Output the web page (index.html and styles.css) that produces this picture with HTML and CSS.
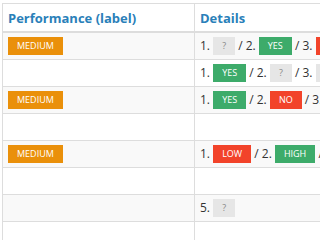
FILE: index.html
```html
<!DOCTYPE html>
<html>
<head>
<meta charset="utf-8">
<link rel="stylesheet" href="styles.css">
</head>
<body>
<div class="wrap">
<table class="grid">
<colgroup><col class="c1"><col class="c2"></colgroup>
<thead>
<tr><th>Performance (label)</th><th>Details</th></tr>
</thead>
<tbody>
<tr class="odd"><td><span class="badge orange">MEDIUM</span></td><td>1. <span class="badge grey">?</span> / 2. <span class="badge green">YES</span> / 3. <span class="badge red">NO</span></td></tr>
<tr><td></td><td>1. <span class="badge green">YES</span> / 2. <span class="badge grey">?</span> / 3. <span class="badge grey">?</span></td></tr>
<tr class="odd"><td><span class="badge orange">MEDIUM</span></td><td>1. <span class="badge green">YES</span> / 2. <span class="badge red">NO</span> / 3. <span class="badge green">YES</span></td></tr>
<tr><td></td><td></td></tr>
<tr class="odd"><td><span class="badge orange">MEDIUM</span></td><td>1. <span class="badge red">LOW</span> / 2. <span class="badge green">HIGH</span> / 3. <span class="badge grey">?</span></td></tr>
<tr><td></td><td></td></tr>
<tr class="odd"><td></td><td>5. <span class="badge grey">?</span></td></tr>
<tr><td></td><td></td></tr>
</tbody>
</table>
</div>
</body>
</html>
```
FILE: styles.css
```css
html, body {
  margin: 0;
  padding: 0;
  background: #fff;
  overflow: hidden;
}
body {
  font-family: "Open Sans", sans-serif;
  font-size: 12px;
  color: #333;
}
.wrap {
  padding: 3px 0 0 2px;
}
.grid {
  border-collapse: collapse;
  table-layout: fixed;
  width: 560px;
}
.c1 { width: 192px; }
.c2 { width: 368px; }
.grid th,
.grid td {
  border: 1px solid #ddd;
  padding: 4px 5px;
  line-height: 18px;
  height: 18px;
  text-align: left;
  white-space: nowrap;
  vertical-align: middle;
}
.grid th {
  font-size: 13px;
  font-weight: 700;
  color: #2a80b9;
  padding-top: 5px;
  border-bottom: 2px solid #ddd;
}
.grid tr.odd td {
  background: #f9f9f9;
}
.badge {
  display: inline-block;
  font-size: 9px;
  line-height: 18px;
  height: 18px;
  padding: 0 9px;
  color: #fff;
  vertical-align: top;
}
.orange { background: #ea900a; }
.green { background: #3dab6a; }
.red { background: #f2432a; }
.grey { background: #e6e6e6; color: #888; }
```
